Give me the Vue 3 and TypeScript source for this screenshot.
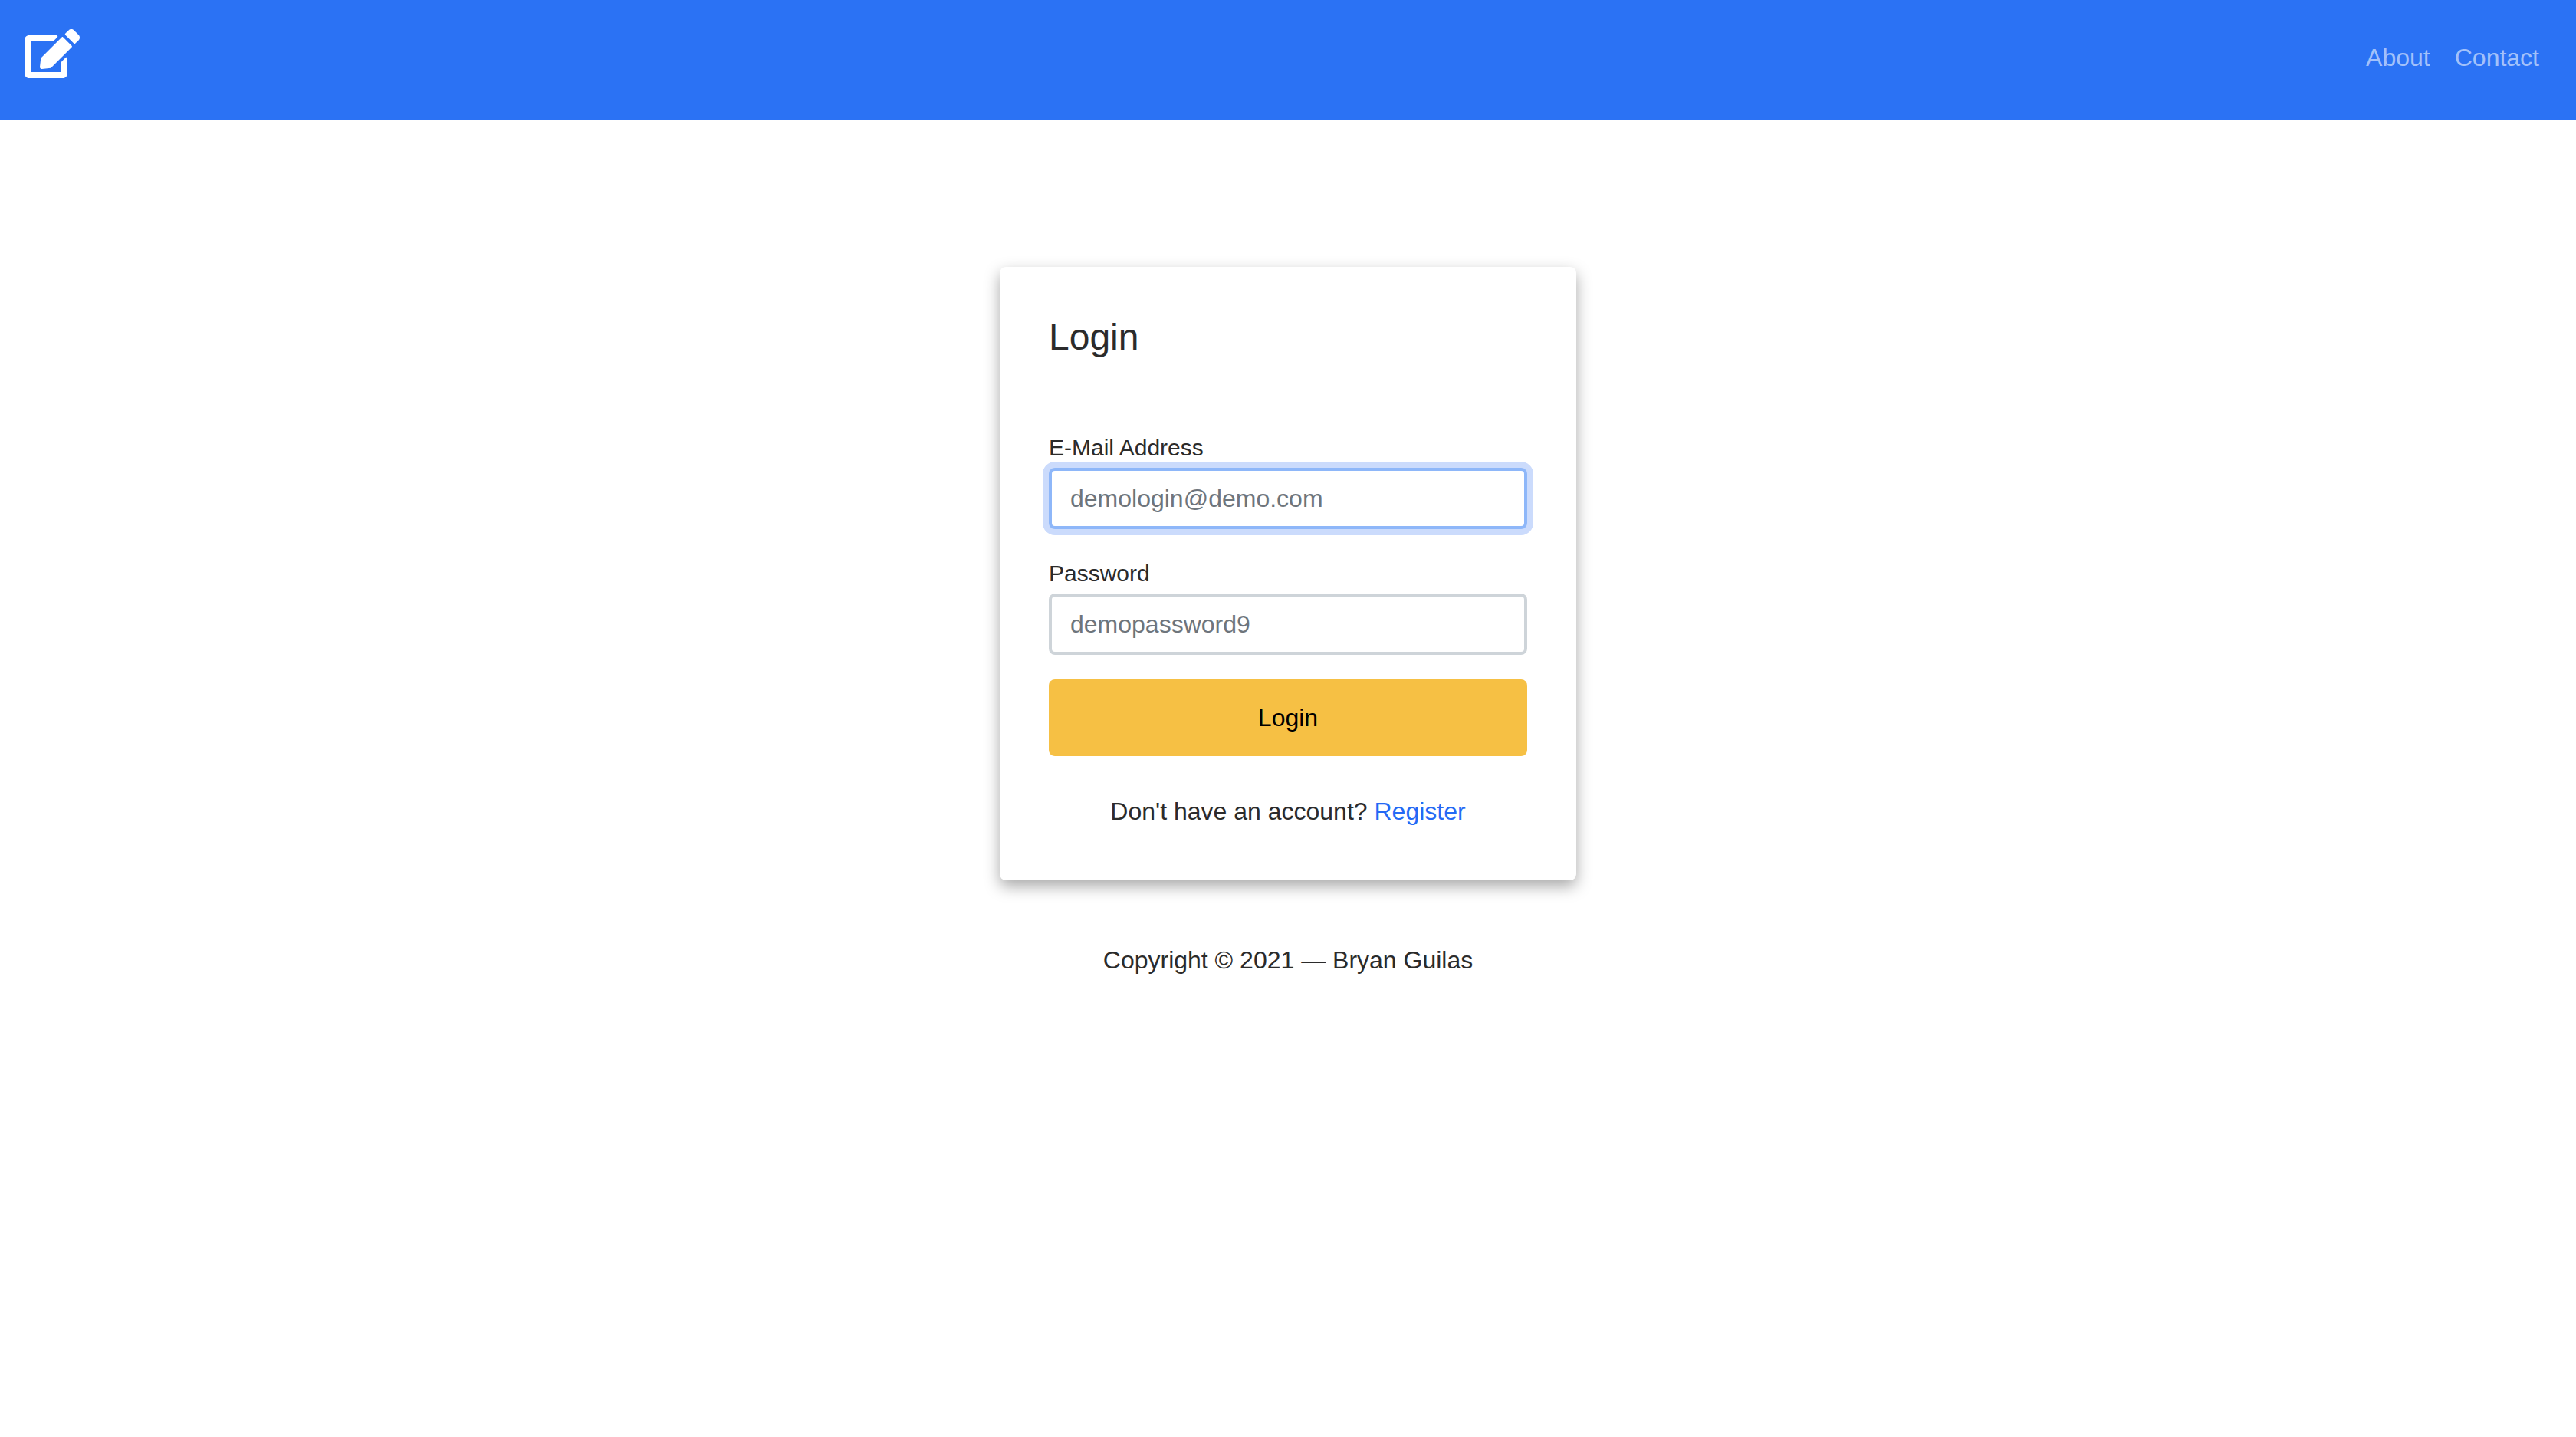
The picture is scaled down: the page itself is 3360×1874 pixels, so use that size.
<script setup lang="ts">
import { ref } from 'vue'

interface NavLink {
  label: string
  href: string
}

const links: NavLink[] = [
  { label: 'About', href: '#about' },
  { label: 'Contact', href: '#contact' },
]

type FieldName = 'email' | 'password'

const email = ref('')
const password = ref('')
const activeField = ref<FieldName>('email')
</script>

<template>
  <header class="navbar">
    <a class="brand" href="#home" aria-label="Home">
      <svg class="brand-icon" viewBox="0 0 576 512" aria-hidden="true">
        <path
          fill="currentColor"
          d="M402.6 83.2l90.2 90.2c3.8 3.8 3.8 10 0 13.8L274.4 405.6l-92.8 10.3c-12.4 1.4-22.9-9.1-21.5-21.5l10.3-92.8L388.8 83.2c3.8-3.8 10-3.8 13.8 0zm162-22.9l-48.8-48.8c-15.2-15.2-39.9-15.2-55.2 0l-35.4 35.4c-3.8 3.8-3.8 10 0 13.8l90.2 90.2c3.8 3.8 10 3.8 13.8 0l35.4-35.4c15.2-15.3 15.2-40 0-55.2zM384 346.2V448H64V128h229.8c3.2 0 6.2-1.3 8.5-3.5l40-40c7.6-7.6 2.2-20.5-8.5-20.5H48C21.5 64 0 85.5 0 112v352c0 26.5 21.5 48 48 48h352c26.5 0 48-21.5 48-48V306.2c0-10.7-12.9-16-20.5-8.5l-40 40c-2.2 2.3-3.5 5.3-3.5 8.5z"
        />
      </svg>
    </a>
    <nav class="nav">
      <a v-for="link in links" :key="link.label" class="nav-link" :href="link.href">{{ link.label }}</a>
    </nav>
  </header>

  <main class="page">
    <section class="card">
      <h1 class="title">Login</h1>
      <form @submit.prevent>
        <div class="field">
          <label class="label" for="email">E-Mail Address</label>
          <input
            id="email"
            v-model="email"
            class="input"
            :class="{ active: activeField === 'email' }"
            type="email"
            placeholder="demologin@demo.com"
            @focus="activeField = 'email'"
          />
        </div>
        <div class="field">
          <label class="label" for="password">Password</label>
          <input
            id="password"
            v-model="password"
            class="input"
            :class="{ active: activeField === 'password' }"
            type="password"
            placeholder="demopassword9"
            @focus="activeField = 'password'"
          />
        </div>
        <button class="submit" type="submit">Login</button>
      </form>
      <p class="signup">Don't have an account? <a class="link" href="#register">Register</a></p>
    </section>
    <footer class="footer">Copyright © 2021 &mdash; Bryan Guilas</footer>
  </main>
</template>

<style>
body {
  background: #fff;
  color: #2b2b2b;
  font-family: "Liberation Sans", Arial, sans-serif;
  font-size: 32px;
  line-height: 48px;
}
</style>

<style scoped>
.navbar {
  display: flex;
  align-items: flex-start;
  justify-content: space-between;
  padding: 38px 48px 44px 32px;
  background: #2b72f4;
}

.brand {
  display: block;
  color: #fff;
}

.brand-icon {
  display: block;
  width: 72px;
  height: 64px;
}

.nav {
  display: flex;
  gap: 32px;
}

.nav-link {
  color: rgba(255, 255, 255, 0.58);
  line-height: 74px;
  text-decoration: none;
}

.page {
  display: flex;
  flex-direction: column;
  align-items: center;
  padding: 192px 32px 64px;
}

.card {
  box-sizing: border-box;
  width: 100%;
  max-width: 752px;
  padding: 64px;
  border-radius: 8px;
  background: #fff;
  box-shadow: 0 8px 20px rgba(0, 0, 0, 0.34);
}

.title {
  margin: 0 0 94px;
  font-size: 48px;
  font-weight: 400;
  line-height: 56px;
}

.field + .field {
  margin-top: 36px;
}

.label {
  display: block;
  margin-bottom: 4px;
  font-size: 30px;
  line-height: 44px;
}

.input {
  display: block;
  box-sizing: border-box;
  width: 100%;
  height: 80px;
  padding: 0 24px;
  border: 4px solid #ced4d9;
  border-radius: 8px;
  outline: 0;
  background: #fff;
  color: #333;
  font: inherit;
}

.input::placeholder {
  color: #6e757c;
  opacity: 1;
}

.input.active {
  border-color: #8eb7f9;
  box-shadow: 0 0 0 8px #cbdbfc;
}

.submit {
  display: block;
  width: 100%;
  margin-top: 32px;
  padding: 26px 24px;
  border: 0;
  border-radius: 8px;
  background: #f6c044;
  color: #000;
  font: inherit;
}

.signup {
  margin: 46px 0 0;
  line-height: 52px;
  text-align: center;
}

.link {
  color: #2469f5;
  text-decoration: none;
}

.footer {
  margin-top: 80px;
  text-align: center;
}
</style>
